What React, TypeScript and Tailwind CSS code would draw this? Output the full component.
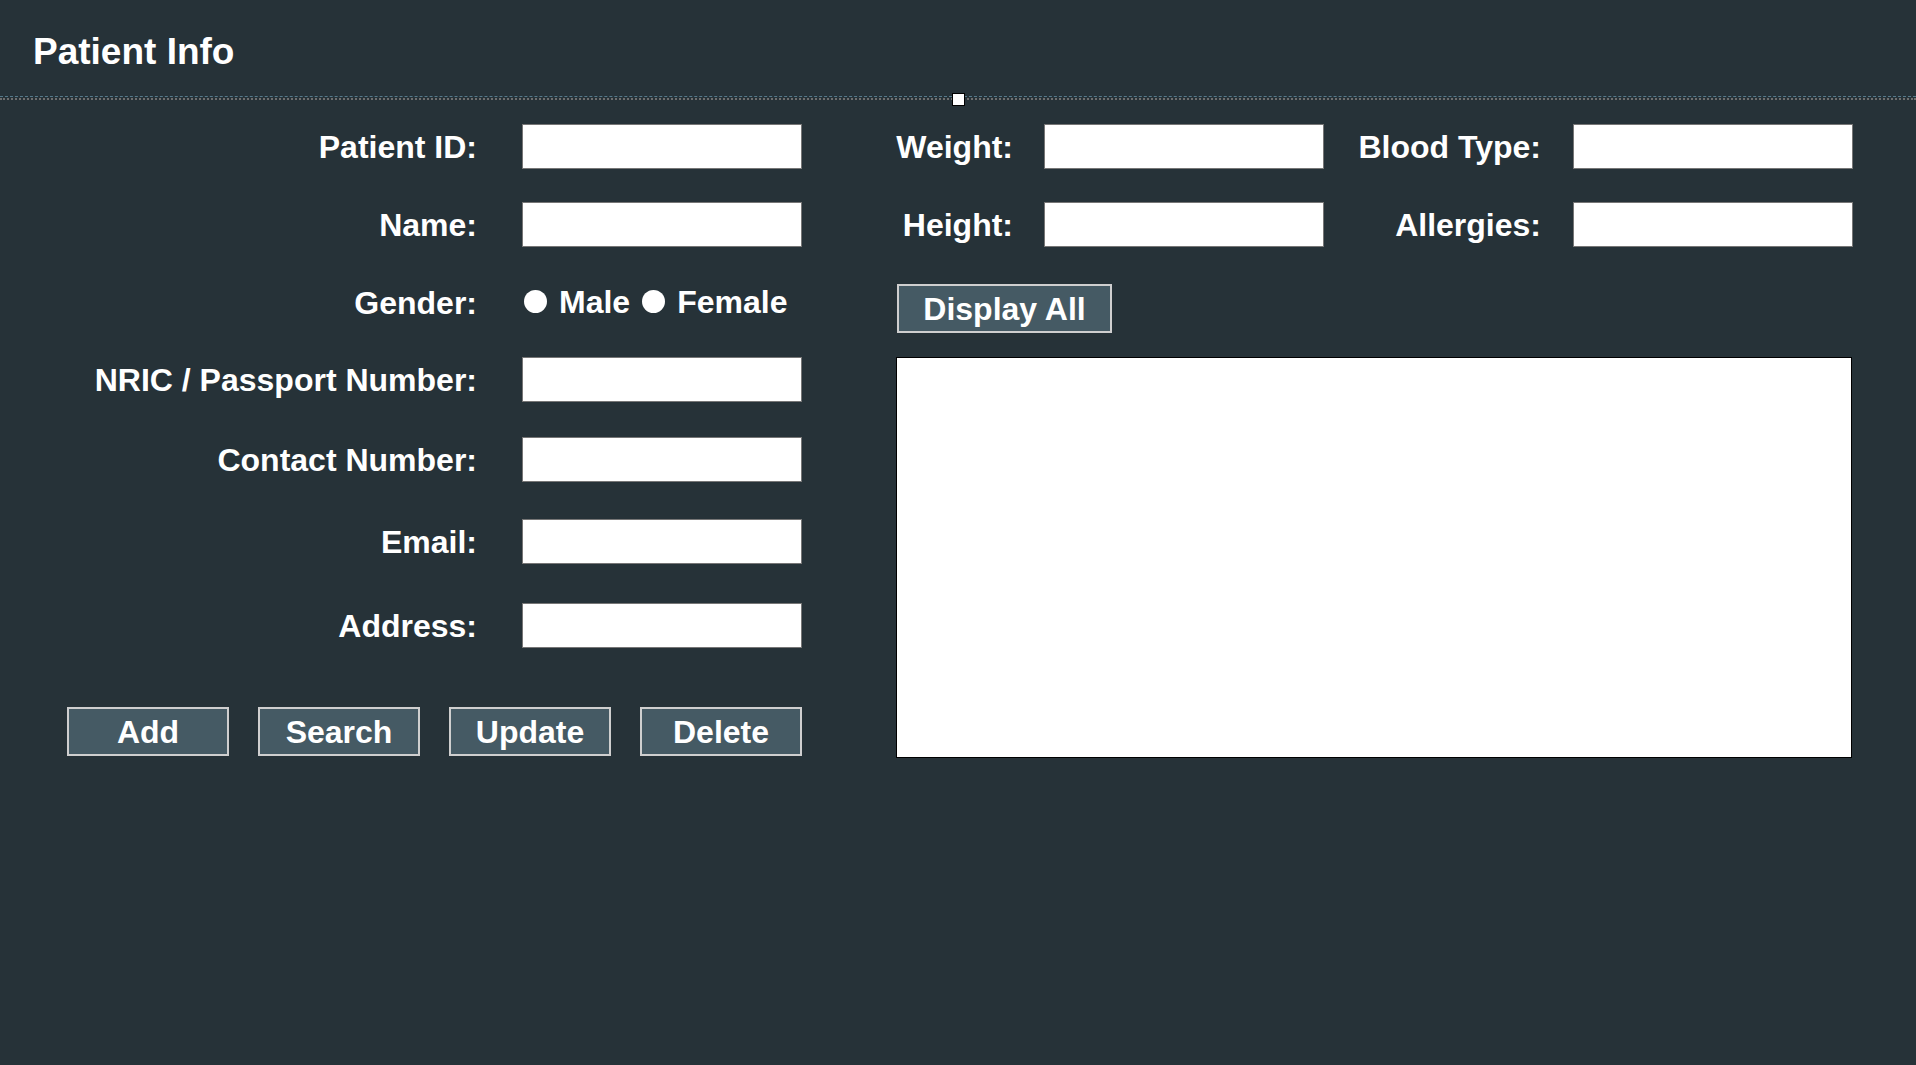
import { useState } from 'react'

const leftRows = [
  { label: 'Patient ID:', mt: 'mt-0' },
  { label: 'Name:', mt: 'mt-[33px]' },
  { label: 'Gender:', mt: 'mt-[33px]', radio: true },
  { label: 'NRIC / Passport Number:', mt: 'mt-[32px]' },
  { label: 'Contact Number:', mt: 'mt-[35px]' },
  { label: 'Email:', mt: 'mt-[37px]' },
  { label: 'Address:', mt: 'mt-[39px]' },
]

function TextBox() {
  return <input type="text" className="w-[280px] h-[45px] bg-white border border-[#767676] outline-none text-black text-base px-1" />
}

function Btn({ label, className = '' }: { label: string; className?: string }) {
  return (
    <button className={`h-[49px] bg-[#455a64] border-2 border-[#cfcfcf] text-white text-[32px] font-bold leading-none ${className}`}>
      {label}
    </button>
  )
}

export default function App() {
  const [gender, setGender] = useState('')

  return (
    <div className="relative w-full h-[1065px] bg-[#263238] text-white font-['Liberation_Sans',Arial,sans-serif]">
      <header className="h-[97px] px-[33px] pt-[6px] flex items-center border-b border-dashed border-[#55798a]">
        <h1 className="text-[37px] font-bold leading-none">Patient Info</h1>
      </header>
      <div className="h-0 mt-px border-t-2 border-dotted border-[#6f6f6f]" />
      {/* resize handle */}
      <div className="absolute left-[952px] top-[93px] w-[13px] h-[13px] bg-white border border-black" />

      <main className="flex pt-[24px] pl-[67px]">
        <section className="w-[735px] flex flex-col">
          {leftRows.map(row => (
            <div key={row.label} className={`flex items-center h-[45px] ${row.mt}`}>
              <div className="w-[410px] text-right text-[32px] font-bold leading-none">{row.label}</div>
              <div className="ml-[45px]">
                {row.radio ? (
                  <div className="flex items-center text-[32px] font-bold leading-none -mt-[2px]">
                    {['Male', 'Female'].map((g, i) => (
                      <label key={g} className={`flex items-center cursor-pointer ${i > 0 ? 'ml-[12px]' : 'ml-[2px]'}`} onClick={() => setGender(g)}>
                        <span className="w-[23px] h-[23px] rounded-full bg-white flex items-center justify-center">
                          {gender === g && <span className="w-[11px] h-[11px] rounded-full bg-[#263238]" />}
                        </span>
                        <span className="ml-[12px]">{g}</span>
                      </label>
                    ))}
                  </div>
                ) : (
                  <TextBox />
                )}
              </div>
            </div>
          ))}

          <div className="flex justify-between mt-[59px]">
            <Btn label="Add" className="w-[162px]" />
            <Btn label="Search" className="w-[162px]" />
            <Btn label="Update" className="w-[162px]" />
            <Btn label="Delete" className="w-[162px]" />
          </div>
        </section>

        <section className="ml-[94px] w-[957px] flex flex-col">
          <div className="flex items-center h-[45px]">
            <div className="w-[117px] text-right text-[32px] font-bold leading-none">Weight:</div>
            <div className="ml-[31px]"><TextBox /></div>
            <div className="w-[217px] text-right text-[32px] font-bold leading-none">Blood Type:</div>
            <div className="ml-[32px]"><TextBox /></div>
          </div>
          <div className="flex items-center h-[45px] mt-[33px]">
            <div className="w-[117px] text-right text-[32px] font-bold leading-none">Height:</div>
            <div className="ml-[31px]"><TextBox /></div>
            <div className="w-[217px] text-right text-[32px] font-bold leading-none">Allergies:</div>
            <div className="ml-[32px]"><TextBox /></div>
          </div>
          <div className="mt-[37px]">
            <Btn label="Display All" className="w-[215px] ml-px" />
          </div>
          <textarea className="mt-[24px] w-[956px] h-[401px] bg-white border border-black resize-none outline-none text-black" />
        </section>
      </main>
    </div>
  )
}
